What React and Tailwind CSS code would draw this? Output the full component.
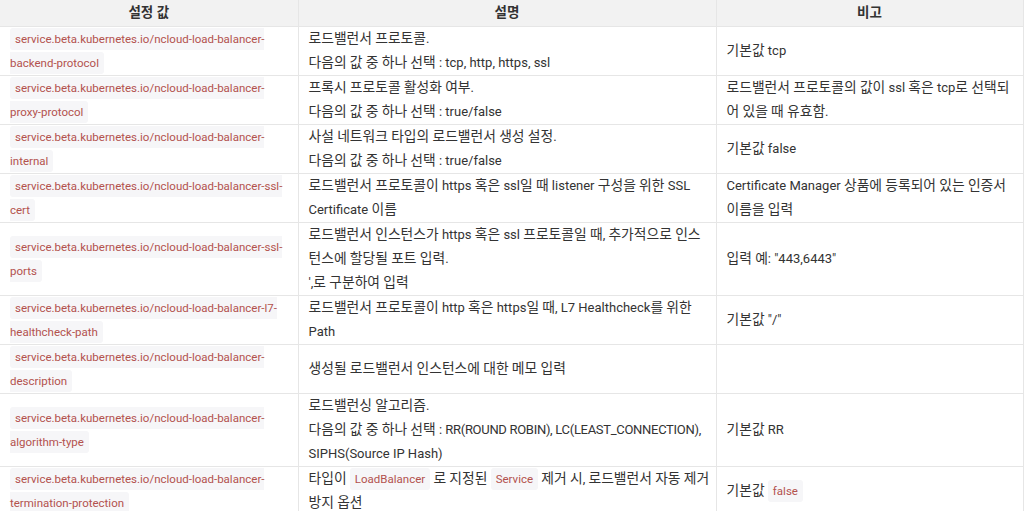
import React from "react";

const HANGUL = /([\uAC00-\uD7A3]+)/;

const K = ({ s }) =>
  s.split(HANGUL).map((p, i) =>
    i % 2 === 1 ? (
      <span key={i} className="text-[13.8px] leading-none">{p}</span>
    ) : (
      <React.Fragment key={i}>{p}</React.Fragment>
    )
  );

const C = ({ children }) => (
  <code className="bg-[#f6f6f8] text-[#b3524e] rounded-[3px] px-[5px] py-[4px] leading-none text-[11.5px] font-['Roboto','Noto_Sans_CJK_KR',sans-serif]">
    {children}
  </code>
);

const Rich = ({ parts }) =>
  parts.map((p, i) => {
    if (p === "BR") return <br key={i} />;
    if (typeof p === "object" && p.code) return <C key={i}>{p.code}</C>;
    if (typeof p === "object" && p.tight) return <span key={i} className="tracking-[-0.3px]">{p.tight}</span>;
    return <K key={i} s={p} />;
  });

const rows = [
  {
    k: "service.beta.kubernetes.io/ncloud-load-balancer-backend-protocol",
    d: ["로드밸런서 프로토콜.", "BR", "다음의 값 중 하나 선택 : tcp, http, https, ssl"],
    n: ["기본값 tcp"],
  },
  {
    k: "service.beta.kubernetes.io/ncloud-load-balancer-proxy-protocol",
    d: ["프록시 프로토콜 활성화 여부.", "BR", "다음의 값 중 하나 선택 : true/false"],
    n: ["로드밸런서 프로토콜의 값이 ssl 혹은 tcp로 선택되어 있을 때 유효함."],
  },
  {
    k: "service.beta.kubernetes.io/ncloud-load-balancer-internal",
    d: ["사설 네트워크 타입의 로드밸런서 생성 설정.", "BR", "다음의 값 중 하나 선택 : true/false"],
    n: ["기본값 false"],
  },
  {
    k: "service.beta.kubernetes.io/ncloud-load-balancer-ssl-cert",
    d: ["로드밸런서 프로토콜이 https 혹은 ssl일 때 listener 구성을 위한 SSL Certificate 이름"],
    n: ["Certificate Manager 상품에 등록되어 있는 인증서 이름을 입력"],
  },
  {
    k: "service.beta.kubernetes.io/ncloud-load-balancer-ssl-ports",
    d: ["로드밸런서 인스턴스가 https 혹은 ssl 프로토콜일 때, 추가적으로 인스턴스에 할당될 포트 입력.", "BR", "',로 구분하여 입력"],
    n: ["입력 예: \"443,6443\""],
  },
  {
    k: "service.beta.kubernetes.io/ncloud-load-balancer-l7-healthcheck-path",
    d: ["로드밸런서 프로토콜이 http 혹은 https일 때, L7 Healthcheck를 위한 Path"],
    n: ["기본값 \"/\""],
  },
  {
    k: "service.beta.kubernetes.io/ncloud-load-balancer-description",
    d: ["생성될 로드밸런서 인스턴스에 대한 메모 입력"],
    n: [],
  },
  {
    k: "service.beta.kubernetes.io/ncloud-load-balancer-algorithm-type",
    d: [
      "로드밸런싱 알고리즘.",
      "BR",
      "다음의 값 중 하나 선택 : ",
      { tight: "RR(ROUND ROBIN), LC(LEAST_CONNECTION)," },
      " SIPHS(Source IP Hash)",
    ],
    n: ["기본값 RR"],
  },
  {
    k: "service.beta.kubernetes.io/ncloud-load-balancer-termination-protection",
    d: ["타입이 ", { code: "LoadBalancer" }, " 로 지정된 ", { code: "Service" }, " 제거 시, 로드밸런서 자동 제거 방지 옵션"],
    n: ["기본값 ", { code: "false" }],
  },
];

export default function App() {
  return (
    <div className="w-[1024px] h-[511px] overflow-hidden bg-white font-['Roboto','Noto_Sans_CJK_KR',sans-serif] text-[13px] text-[#333]">
      <table className="w-[1023px] border-collapse table-fixed">
        <colgroup>
          <col className="w-[298px]" />
          <col className="w-[418px]" />
          <col className="w-[307px]" />
        </colgroup>
        <thead>
          <tr className="bg-[#f2f2f2]">
            <th className="border-r border-b border-[#e6e6e6] font-bold text-[13.5px] text-center leading-[25px] h-[26px] p-0">설정 값</th>
            <th className="border-x border-b border-[#e6e6e6] font-bold text-[13.5px] text-center leading-[25px] h-[26px] p-0">설명</th>
            <th className="border-x border-b border-[#e6e6e6] font-bold text-[13.5px] text-center leading-[25px] h-[26px] p-0">비고</th>
          </tr>
        </thead>
        <tbody>
          {rows.map((r, i) => (
            <tr key={i}>
              <td className="border-r border-b border-[#e6e6e6] pl-[10px] pr-[8px] py-0 leading-[24px] align-middle">
                <C>{r.k}</C>
              </td>
              <td className="border-x border-b border-[#e6e6e6] pl-[10px] pr-[4px] py-0 leading-[24px] align-middle">
                <Rich parts={r.d} />
              </td>
              <td className="border-x border-b border-[#e6e6e6] pl-[10px] pr-[4px] py-0 leading-[24px] align-middle">
                <Rich parts={r.n} />
              </td>
            </tr>
          ))}
        </tbody>
      </table>
    </div>
  );
}
